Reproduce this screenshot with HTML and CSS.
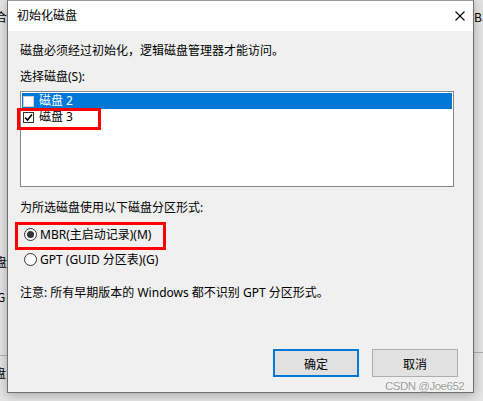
FILE: index.html
```html
<!DOCTYPE html>
<html lang="zh-CN">
<head>
<meta charset="utf-8">
<title>初始化磁盘</title>
<link rel="stylesheet" href="styles.css">
</head>
<body>
<div class="desktop">
  <span class="bg-frag bg-l1">合</span>
  <span class="bg-frag bg-l2">盘</span>
  <span class="bg-frag bg-l3">G</span>
  <span class="bg-frag bg-l4">盘</span>
  <span class="bg-frag bg-r1">B3</span>
  <div class="bg-line bg-line-l"></div>
  <div class="bg-line bg-line-r"></div>

  <div class="dialog">
    <div class="titlebar">
      <span class="title">初始化磁盘</span>
      <svg class="close" width="10" height="10" viewBox="0 0 10 10"><path d="M0.5 0.5 L9.5 9.5 M9.5 0.5 L0.5 9.5" stroke="#000" stroke-width="1.1" fill="none"/></svg>
    </div>
    <div class="body">
      <div class="desc">磁盘必须经过初始化，逻辑磁盘管理器才能访问。</div>
      <div class="label">选择磁盘(S):</div>
      <div class="listbox">
        <div class="row selected">
          <span class="cb"></span>
          <span>磁盘 2</span>
        </div>
        <div class="row">
          <span class="cb checked"><svg width="9" height="9" viewBox="0 0 9 9"><path d="M1 4.5 L3.5 7 L8 1.5" stroke="#000" stroke-width="1.6" fill="none"/></svg></span>
          <span>磁盘 3</span>
        </div>
      </div>
      <div class="label group">为所选磁盘使用以下磁盘分区形式:</div>
      <div class="radio-row">
        <svg class="radio" width="13" height="13" viewBox="0 0 13 13"><circle cx="6.5" cy="6.5" r="6" fill="#fff" stroke="#333"/><circle cx="6.5" cy="6.5" r="3.5" fill="#333"/></svg>
        <span>MBR(主启动记录)(M)</span>
      </div>
      <div class="radio-row">
        <svg class="radio" width="13" height="13" viewBox="0 0 13 13"><circle cx="6.5" cy="6.5" r="6" fill="#fff" stroke="#333"/></svg>
        <span>GPT (GUID 分区表)(G)</span>
      </div>
      <div class="note">注意: 所有早期版本的 Windows 都不识别 GPT 分区形式。</div>
      <div class="buttons">
        <button class="btn default">确定</button>
        <button class="btn">取消</button>
      </div>
    </div>
  </div>

  <div class="mark mark-disk"></div>
  <div class="mark mark-mbr"></div>
  <div class="watermark">CSDN @Joe652</div>
</div>
</body>
</html>
```

FILE: styles.css
```css
* { box-sizing: border-box; }
html, body { margin: 0; padding: 0; }
body {
  font-family: "Noto Sans", "Noto Sans CJK SC", sans-serif;
  font-size: 12px;
  color: #000;
}
.desktop {
  position: relative;
  width: 483px;
  height: 401px;
  overflow: hidden;
  background: #e4e4e4;
}
.bg-frag {
  position: absolute;
  font-family: "Noto Sans CJK SC", sans-serif;
  font-size: 12px;
  line-height: 14px;
  color: #000;
}
.bg-l1 { left: -5px; top: 10px; }
.bg-l2 { left: -5px; top: 255px; }
.bg-l3 { left: -3px; top: 290px; }
.bg-l4 { left: -6px; top: 366px; }
.bg-r1 { left: 474px; top: 10px; }
.bg-line {
  position: absolute;
  height: 1px;
  background: #b0b0b0;
}
.bg-line-l { left: 0; width: 8px; top: 355px; }
.bg-line-r { left: 474px; width: 9px; top: 352px; }

.dialog {
  position: absolute;
  left: 7px;
  top: 0;
  width: 467px;
  height: 393px;
  border: 1px solid #6e6e6e;
  border-top-color: #9a9a9a;
  background: #f0f0f0;
  box-shadow: 0 2px 10px rgba(0,0,0,0.28);
  display: flex;
  flex-direction: column;
}
.titlebar {
  height: 30px;
  background: #fff;
  display: flex;
  align-items: center;
  justify-content: space-between;
  padding: 0 8px 0 9px;
  flex-shrink: 0;
}
.title { line-height: 16px; }
.close { display: block; }

.body {
  padding: 0 12px;
  display: flex;
  flex-direction: column;
  align-items: flex-start;
}
.desc { margin-top: 12px; line-height: 16px; }
.label { margin-top: 10px; line-height: 16px; }
.listbox {
  margin-top: 6px;
  width: 434px;
  height: 96px;
  border: 1px solid #828790;
  background: #fff;
  padding: 1px;
}
.row {
  height: 16px;
  display: flex;
  align-items: center;
  gap: 5px;
  padding-left: 1px;
  line-height: 16px;
}
.row.selected { background: #0078d7; color: #fff; }
.cb {
  width: 11px;
  height: 11px;
  border: 1px solid #333;
  background: #fff;
  display: flex;
  align-items: center;
  justify-content: center;
}
.row.selected .cb { border-color: #cfcfcf; }
.cb svg { display: block; }

.label.group { margin-top: 13px; }
.radio-row {
  height: 25px;
  display: flex;
  align-items: center;
  gap: 3px;
  padding-left: 4px;
  line-height: 16px;
}
.label.group + .radio-row { margin-top: 6px; }
.radio { display: block; }
.note { margin-top: 13px; line-height: 16px; }

.buttons {
  margin-top: 48px;
  align-self: stretch;
  display: flex;
  justify-content: flex-end;
  gap: 13px;
  padding-right: 3px;
}
.btn {
  width: 86px;
  height: 28px;
  background: #e1e1e1;
  border: 1px solid #adadad;
  font-family: "Noto Sans CJK SC", "Noto Sans", sans-serif;
  font-size: 12px;
  color: #000;
  padding: 0;
}
.btn.default { border: 2px solid #0078d7; }

.mark {
  position: absolute;
  border: 3px solid #ff0000;
}
.mark-disk { left: 17px; top: 108px; width: 84px; height: 22px; }
.mark-mbr { left: 15px; top: 222px; width: 151px; height: 28px; }

.watermark {
  position: absolute;
  left: 385px;
  top: 379px;
  font-family: "Liberation Sans", Arial, sans-serif;
  font-size: 11.5px;
  letter-spacing: -0.5px;
  line-height: 14px;
  color: #9a9a9a;
  text-shadow: 0 0 1px #fff, 0 0 1px #fff;
}
```
